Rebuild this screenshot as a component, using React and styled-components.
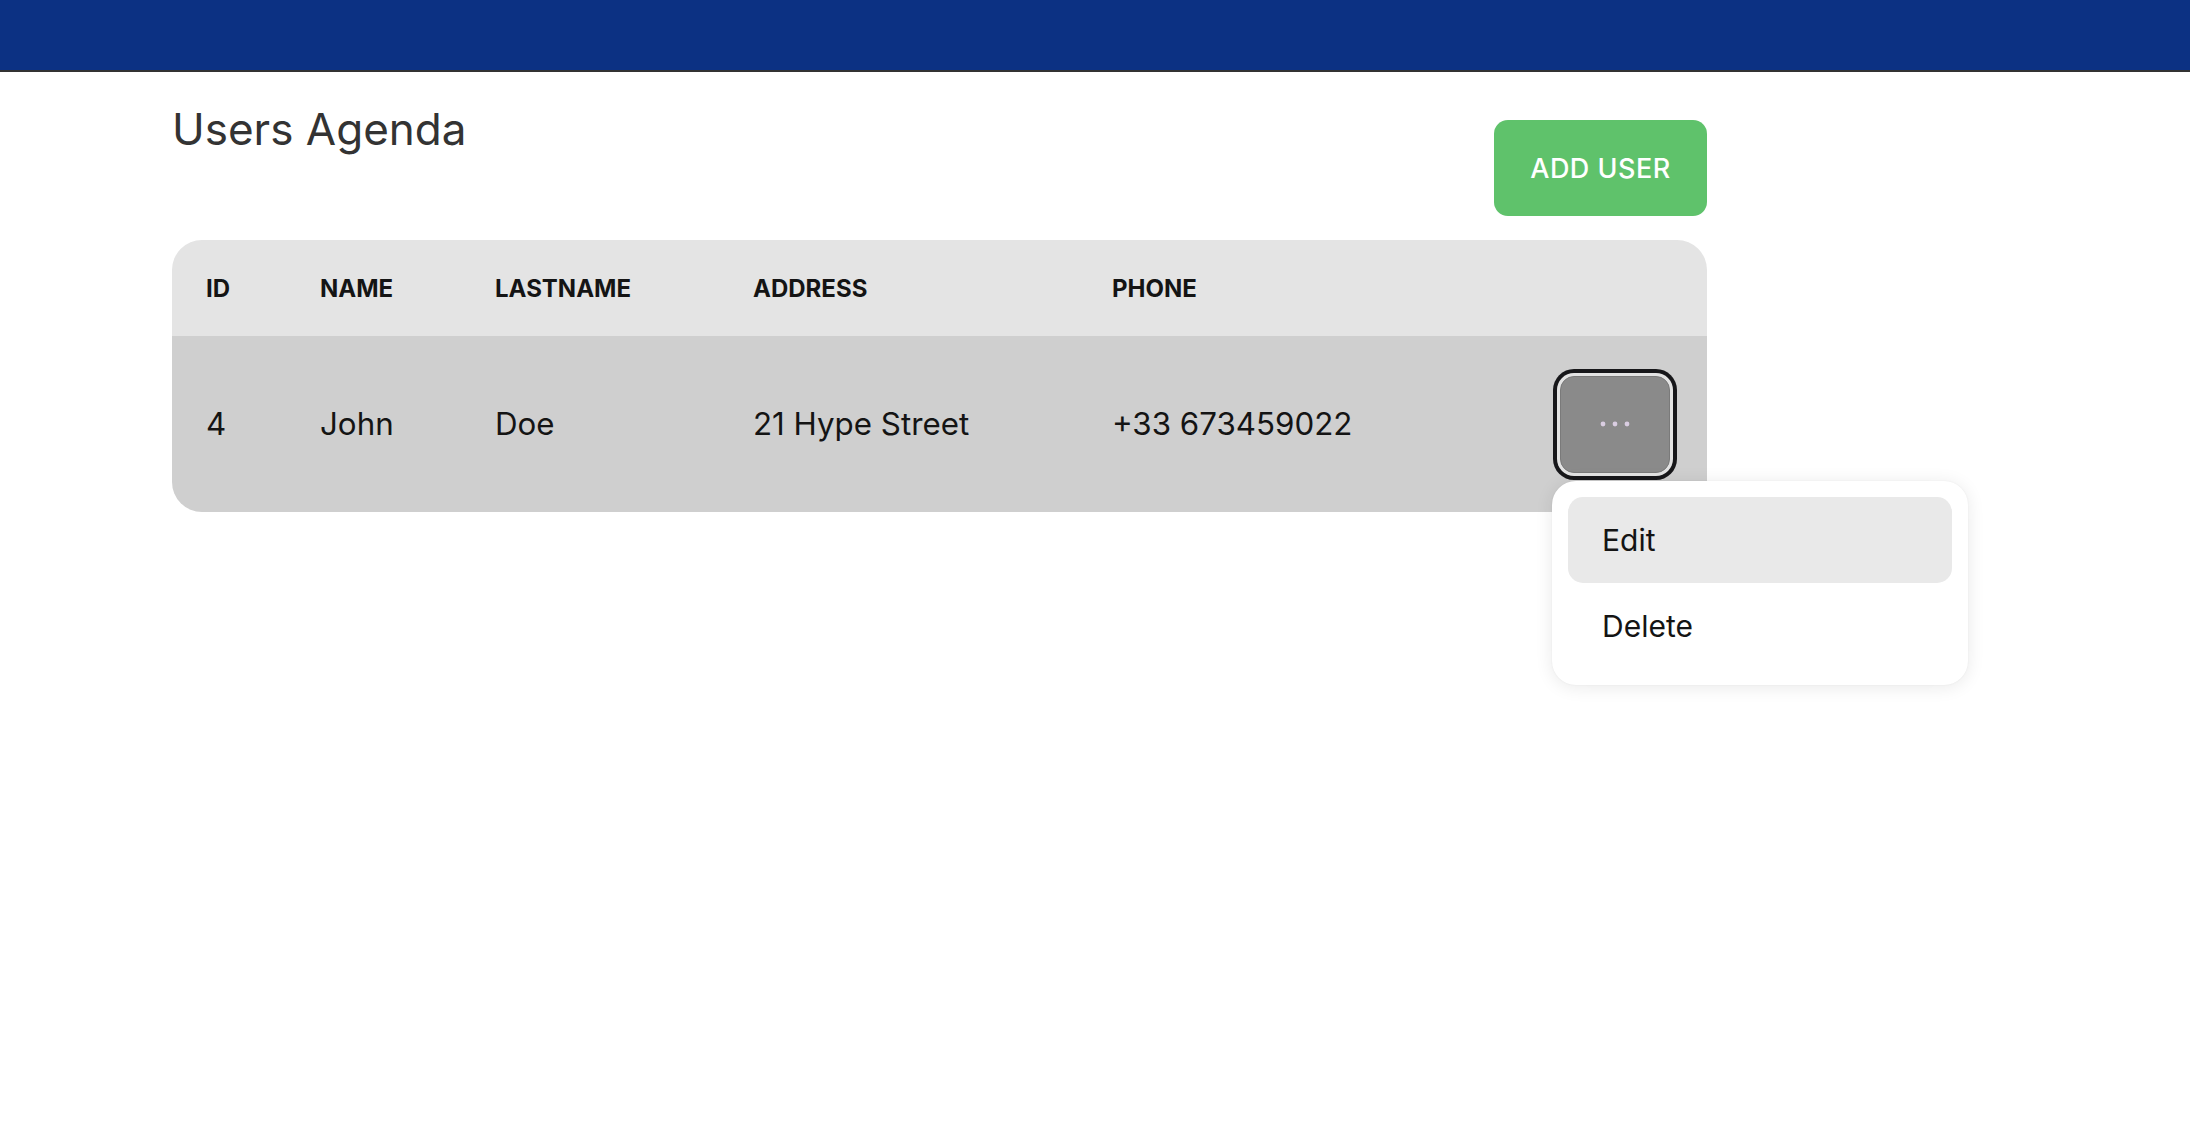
import React from 'react';
import styled, { createGlobalStyle } from 'styled-components';

const GlobalStyle = createGlobalStyle`
  html, body {
    margin: 0;
    background: #fff;
  }
  body {
    font-family: Inter, "Noto Sans", sans-serif;
    color: #11181c;
  }
`;

const Page = styled.div`
  min-height: 100vh;
  position: relative;
`;

const TopBar = styled.header`
  height: 70px;
  background-color: #0c3183;
  border-bottom: 2px solid #333;
`;

const Main = styled.main`
  width: 1535px;
  padding-left: 172px;
`;

const TitleRow = styled.div`
  display: flex;
  justify-content: space-between;
  align-items: flex-start;
`;

const Title = styled.h1`
  margin: 30px 0 0;
  font-size: 44px;
  font-weight: 400;
  line-height: normal;
  color: #333;
`;

const AddButton = styled.button`
  margin-top: 48px;
  width: 213px;
  height: 96px;
  border: 0;
  border-radius: 14px;
  background-color: #5fc26b;
  color: #fff;
  font-family: Inter, sans-serif;
  font-size: 27px;
  font-weight: 500;
  letter-spacing: 0.5px;
  cursor: pointer;
`;

const Table = styled.div`
  margin-top: 24px;
`;

const columns = '114px 175px 258px 359px 1fr auto';

const HeadRow = styled.div`
  display: grid;
  grid-template-columns: ${columns};
  height: 96px;
  background-color: #e4e4e4;
  border-radius: 30px 30px 0 0;
`;

const BodyRow = styled.div`
  display: grid;
  grid-template-columns: ${columns};
  height: 176px;
  background-color: #cfcfcf;
  border-radius: ${(p) => (p.$last ? '0 0 30px 30px' : '0')};
`;

const HeadCell = styled.div`
  display: flex;
  align-items: center;
  padding-left: 34px;
  font-size: 24px;
  font-weight: 700;
  color: #141414;
`;

const Cell = styled.div`
  display: flex;
  align-items: center;
  padding-left: 34px;
  font-size: 31.3px;
  font-weight: 400;
  color: #141414;
`;

const ActionCell = styled.div`
  display: flex;
  align-items: center;
  justify-content: flex-end;
  padding-right: 37px;
`;

const MenuAnchor = styled.div`
  position: relative;
  z-index: 5;
`;

const DotsButton = styled.button`
  display: flex;
  align-items: center;
  justify-content: center;
  width: 110px;
  height: 97px;
  box-sizing: border-box;
  border: 1.5px solid #7a7a7a;
  border-radius: 14px;
  background-color: #8a8a8a;
  box-shadow: 0 0 0 3px #e3e3e3, 0 0 0 7px #17171a;
  cursor: pointer;
`;

const Menu = styled.ul`
  position: absolute;
  left: -8px;
  top: calc(100% + 8px);
  z-index: 10;
  width: 416px;
  box-sizing: border-box;
  margin: 0;
  padding: 16px;
  list-style: none;
  background: #fff;
  border-radius: 24px;
  box-shadow: 0 2px 18px rgba(0, 0, 0, 0.09), 0 0 2px rgba(0, 0, 0, 0.06);
`;

const MenuItem = styled.li`
  display: flex;
  align-items: center;
  height: 86px;
  padding-left: 34px;
  border-radius: 15px;
  background-color: ${(p) => (p.$active ? '#e9e9e9' : 'transparent')};
  font-size: 30px;
  color: #141414;
  cursor: pointer;
`;

const Dots = () => (
  <svg width="30" height="6" viewBox="0 0 30 6">
    <circle cx="3" cy="3" r="2.4" fill="#d9cde1" />
    <circle cx="15" cy="3" r="2.4" fill="#d9cde1" />
    <circle cx="27" cy="3" r="2.4" fill="#d9cde1" />
  </svg>
);

const users = [
  { id: 4, name: 'John', lastname: 'Doe', address: '21 Hype Street', phone: '+33 673459022' },
];

const headers = ['ID', 'NAME', 'LASTNAME', 'ADDRESS', 'PHONE', ''];

export default function App() {
  return (
    <Page>
      <GlobalStyle />
      <TopBar />
      <Main>
        <TitleRow>
          <Title>Users Agenda</Title>
          <AddButton>ADD USER</AddButton>
        </TitleRow>
        <Table>
          <HeadRow>
            {headers.map((h, i) => (
              <HeadCell key={i}>{h}</HeadCell>
            ))}
          </HeadRow>
          {users.map((u, i) => (
            <BodyRow key={u.id} $last={i === users.length - 1}>
              <Cell>{u.id}</Cell>
              <Cell>{u.name}</Cell>
              <Cell>{u.lastname}</Cell>
              <Cell>{u.address}</Cell>
              <Cell>{u.phone}</Cell>
              <ActionCell>
                <MenuAnchor>
                  <DotsButton aria-label="Actions">
                    <Dots />
                  </DotsButton>
                  <Menu>
                    <MenuItem $active>Edit</MenuItem>
                    <MenuItem>Delete</MenuItem>
                  </Menu>
                </MenuAnchor>
              </ActionCell>
            </BodyRow>
          ))}
        </Table>
      </Main>
    </Page>
  );
}
